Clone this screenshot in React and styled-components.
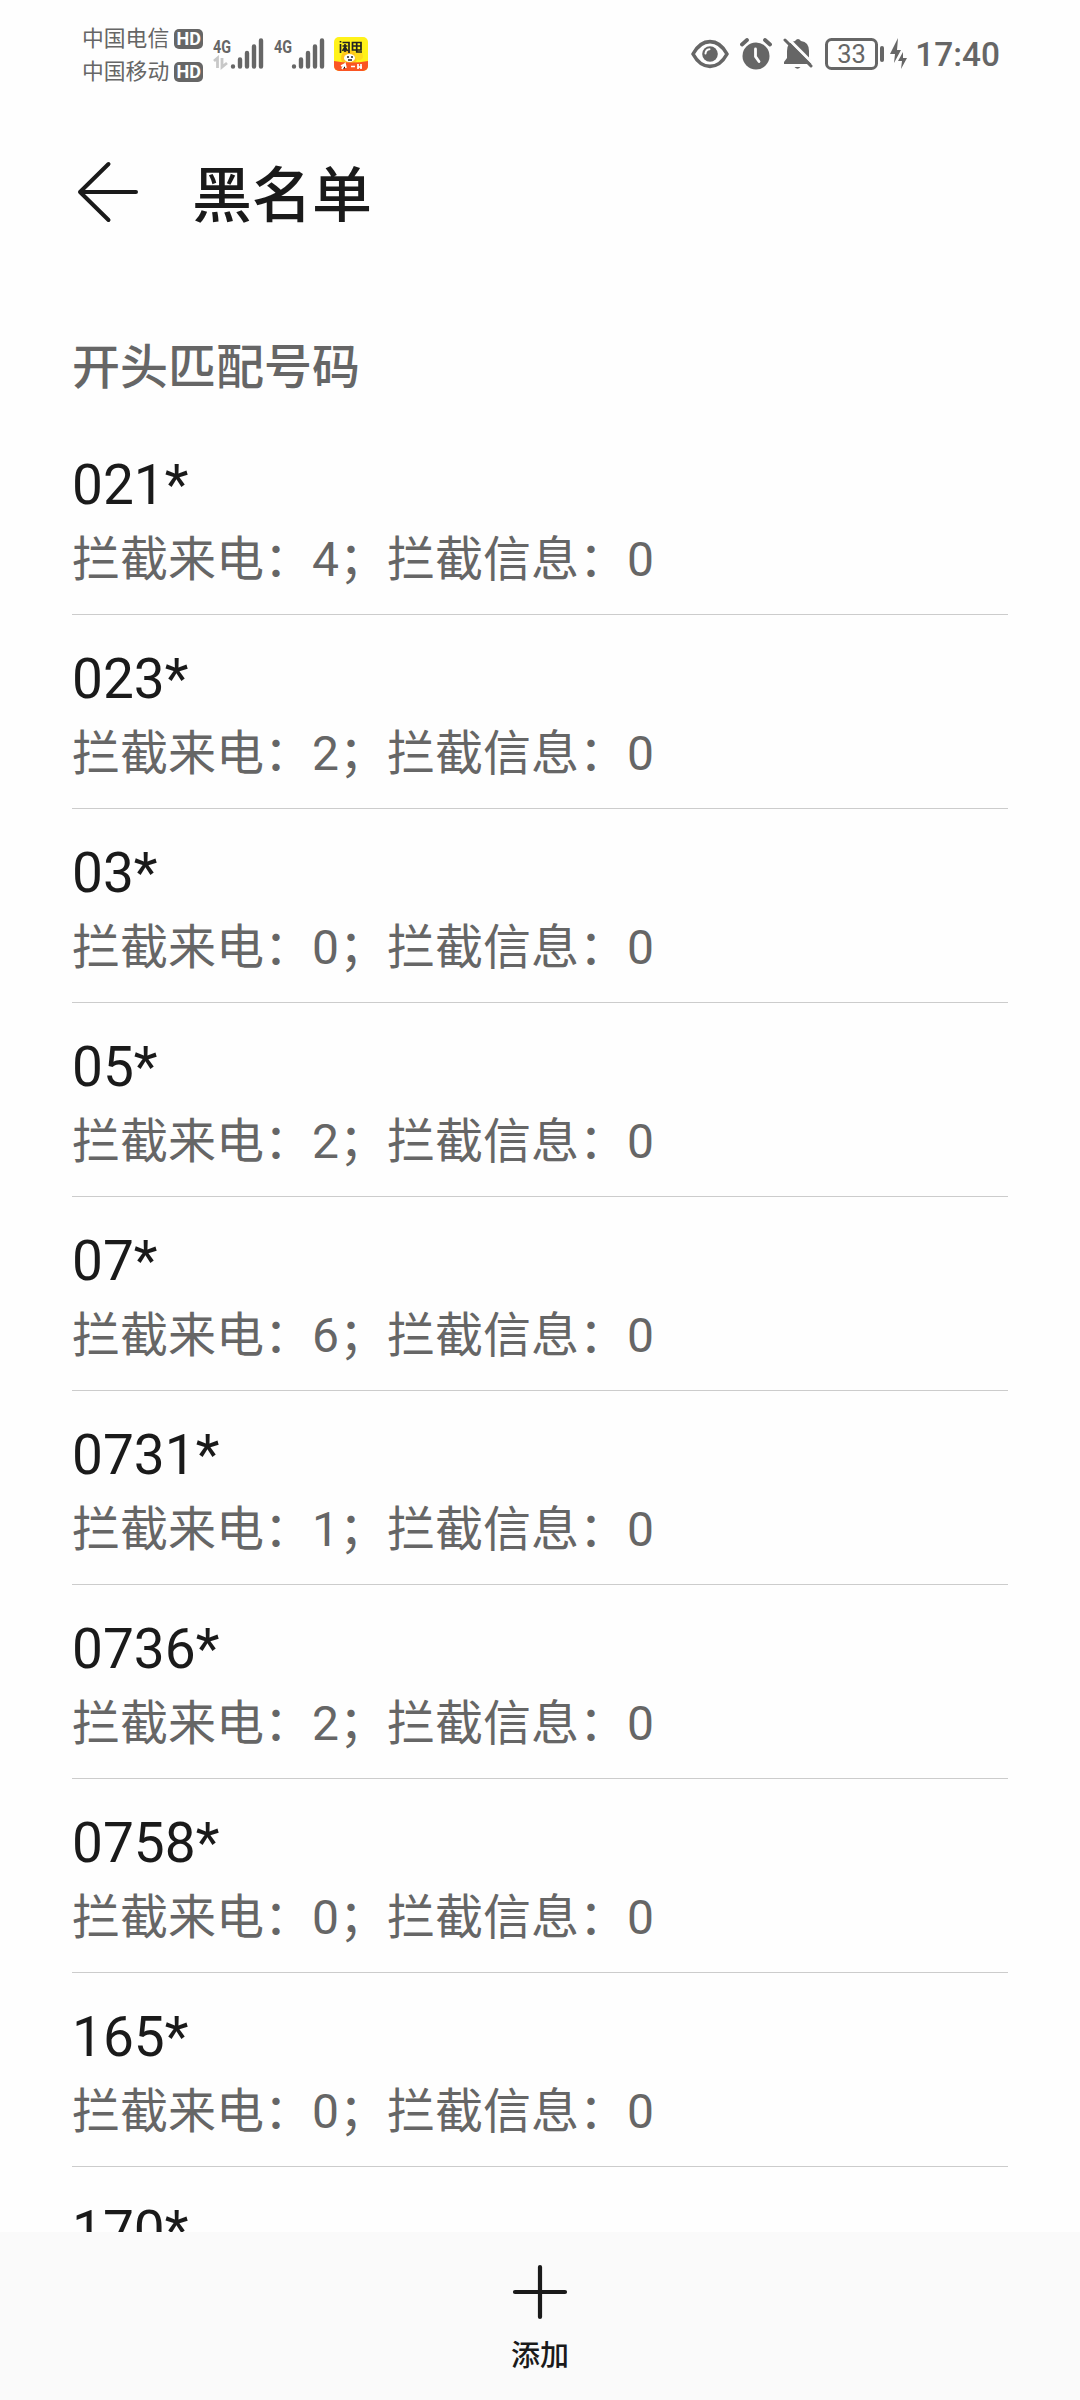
import React from "react";
import styled, { createGlobalStyle } from "styled-components";

const GlobalStyle = createGlobalStyle`
  * { box-sizing: border-box; }
  html, body { margin: 0; background: #fefefe; }
  body { font-family: Roboto, "Noto Sans CJK SC", sans-serif; color: #1a1a1a; }
`;

const Screen = styled.div`
  width: 1080px;
  height: 2400px;
  display: flex;
  flex-direction: column;
  overflow: hidden;
  background: #fefefe;
`;

const StatusBar = styled.div`
  flex: none;
  height: 108px;
  padding: 0 80px 0 82px;
  display: flex;
  align-items: center;
  justify-content: space-between;
  color: #666;
`;

const StatusGroup = styled.div`
  display: flex;
  align-items: center;
`;

const Carriers = styled.div`
  display: grid;
  padding-top: 2px;
`;

const Carrier = styled.div`
  display: flex;
  align-items: center;
  gap: 5px;
  height: 33px;
  font-size: 21.8px;
  line-height: 33px;
`;

const HdBadge = styled.span`
  width: 29px;
  height: 20px;
  border-radius: 5px;
  background: #666;
  color: #fefefe;
  font-size: 18px;
  font-weight: 700;
  line-height: 20px;
  text-align: center;
`;

const Signals = styled.svg`
  margin-left: 10px;
  display: block;
`;

const AppIcon = styled.svg`
  margin-left: 8px;
  display: block;
`;

const StatusIcon = styled.svg`
  display: block;
  margin-right: ${(p) => p.$gap || 0}px;
`;

const Clock = styled.span`
  padding-top: 2px;
  font-size: 33.4px;
  font-weight: 500;
  line-height: 40px;
`;

const Header = styled.header`
  flex: none;
  height: 168px;
  padding: 0 72px;
  display: flex;
  align-items: center;
  gap: 48px;
`;

const Title = styled.h1`
  margin: 0;
  padding-top: 9px;
  font-size: 60px;
  font-weight: 500;
  line-height: 80px;
`;

const List = styled.main`
  flex: 1;
  min-height: 0;
  overflow: hidden;
  padding: 58px 72px 0;
`;

const SectionTitle = styled.h2`
  margin: 0;
  height: 87px;
  font-size: 48px;
  font-weight: 500;
  line-height: 68px;
  color: #666;
`;

const Row = styled.div`
  height: 194px;
  padding-top: 29px;
  border-bottom: 1px solid #ccc;
`;

const Prefix = styled.div`
  font-size: 55px;
  line-height: 70px;
`;

const Counts = styled.div`
  margin-top: 5px;
  font-size: 48px;
  line-height: 70px;
  color: #666;
  white-space: nowrap;
`;

const BottomBar = styled.footer`
  flex: none;
  height: 168px;
  background: #fafafa;
  display: flex;
  flex-direction: column;
  align-items: center;
  padding-top: 32px;
`;

const AddLabel = styled.span`
  margin-top: 15px;
  font-size: 29px;
  font-weight: 500;
  line-height: 42px;
`;

const entries = [
  ["021*", 4], ["023*", 2], ["03*", 0], ["05*", 2], ["07*", 6],
  ["0731*", 1], ["0736*", 2], ["0758*", 0], ["165*", 0], ["170*", null],
];

const SignalBars = ({ x }) => (
  <path
    d={`M${x} 33.500v0.100M${x + 7} 33.500v-7M${x + 14} 33.500v-13.500M${x + 21} 33.500v-20M${x + 28} 33.500v-26`}
    stroke="#666"
    strokeWidth="4.4"
    strokeLinecap="round"
  />
);

function SignalIcons() {
  return (
    <Signals width="113" height="42" viewBox="0 0 113 42">
      <g fill="#666" fontFamily="Roboto" fontWeight="700" fontSize="18.5">
        <text x="0" y="19.500" textLength="18" lengthAdjust="spacingAndGlyphs">4G</text>
        <text x="61" y="19.500" textLength="18" lengthAdjust="spacingAndGlyphs">4G</text>
      </g>
      <path d="M1 28l3.500-3v10M9 25v9l5-4" fill="none" stroke="#c8c8c8" strokeWidth="2.8" />
      <SignalBars x={20} />
      <SignalBars x={81} />
    </Signals>
  );
}

export default function App() {
  return (
    <>
      <GlobalStyle />
      <Screen>
        <StatusBar>
          <StatusGroup>
            <Carriers>
              {["中国电信", "中国移动"].map((name) => (
                <Carrier key={name}>{name}<HdBadge>HD</HdBadge></Carrier>
              ))}
            </Carriers>
            <SignalIcons />
            <AppIcon width="34" height="34" viewBox="0 0 34 34">
              <defs><clipPath id="tile"><rect width="34" height="34" rx="5" /></clipPath></defs>
              <g clipPath="url(#tile)">
                <rect width="34" height="34" fill="#fff21a" />
                <circle cx="15" cy="21" r="8" fill="#ffc81e" />
                <circle cx="25" cy="19" r="4" fill="#ffdc1e" />
                <path d="M0 24q17 3 34 0v10H0z" fill="#fa5523" />
                <ellipse cx="15.500" cy="21" rx="5.500" ry="4" fill="#fff" />
                <path d="M14 19v2M18 19v2M14 23h4" stroke="#222" strokeWidth="1.5" />
                <path d="M6.500 7v9M8.500 5.500H15V16M6.500 4v1.500M8.500 9h5M11 7v8M8.500 14l2.500-4 2.500 4M18.500 5.500h8.500v7.500h-8.500zM18.500 9h8.500M22.700 5.500v9.500H28" fill="none" stroke="#222" strokeWidth="1.700" />
                <path d="M7 29l4-2M8 32l3-5 1 4M17 29.500h4M24 27v5M27 27v5M24 30h4" stroke="#fff" strokeWidth="1.700" />
              </g>
            </AppIcon>
          </StatusGroup>
          <StatusGroup>
            <StatusIcon $gap={11} width="38" height="32" viewBox="0 0 38 32">
              <path d="M2 16C11-0.500 27-0.500 36 16C27 32.500 11 32.500 2 16z" fill="none" stroke="#666" strokeWidth="3.600" strokeLinejoin="round" />
              <circle cx="19" cy="16" r="7.8" fill="#666" />
              <path d="M14.500 15.500q0.300-3.800 4-4.300" fill="none" stroke="#fefefe" strokeWidth="2" strokeLinecap="round" />
            </StatusIcon>
            <StatusIcon $gap={11} width="32" height="32" viewBox="0 0 32 32">
              <circle cx="16" cy="18" r="13.5" fill="#666" />
              <path d="M2 6.500l5-4.500M30 6.500l-5-4.500" stroke="#666" strokeWidth="3.8" strokeLinecap="round" />
              <path d="M15.500 11v7.500l3.500 5" fill="none" stroke="#fefefe" strokeWidth="2.8" strokeLinecap="round" />
            </StatusIcon>
            <StatusIcon $gap={12} width="30" height="32" viewBox="0 0 30 32">
              <path d="M1 26v-2l3-4V13Q4 4 12 3q3-4 6 0 8 1 8 10v7l3 4v2z" fill="#666" />
              <path d="M11.500 29h6q-3 3.500-6 0" fill="#666" />
              <path d="M4.500 0l26 26" stroke="#fefefe" strokeWidth="3" />
              <path d="M2 2l26 26" stroke="#666" strokeWidth="3" strokeLinecap="round" />
            </StatusIcon>
            <StatusIcon $gap={5} width="60" height="32" viewBox="0 0 60 32">
              <rect x="1.500" y="1.500" width="50" height="29" rx="5" fill="none" stroke="#666" strokeWidth="3" />
              <path d="M57 10v12" stroke="#666" strokeWidth="4" strokeLinecap="round" />
              <text x="26.500" y="25" textAnchor="middle" fill="#666" fontFamily="Roboto" fontSize="25.500">33</text>
            </StatusIcon>
            <StatusIcon $gap={8} width="17" height="32" viewBox="0 0 17 32">
              <path d="M8 0L0 16h5l-1 9 7-13H7zM13 14l-5 9h4l-1 8 6-11h-4z" fill="#666" />
            </StatusIcon>
            <Clock>17:40</Clock>
          </StatusGroup>
        </StatusBar>
        <Header>
          <svg width="72" height="72" viewBox="0 0 72 72">
            <path d="M36.500 8L8 36l28.500 28M8 36h56" fill="none" stroke="#1a1a1a" strokeWidth="4" strokeLinecap="round" strokeLinejoin="round" />
          </svg>
          <Title>黑名单</Title>
        </Header>
        <List>
          <SectionTitle>开头匹配号码</SectionTitle>
          {entries.map(([prefix, calls]) => (
            <Row key={prefix}>
              <Prefix>{prefix}</Prefix>
              {calls !== null && <Counts>拦截来电：{calls}；拦截信息：0</Counts>}
            </Row>
          ))}
        </List>
        <BottomBar>
          <svg width="56" height="56" viewBox="0 0 56 56">
            <path d="M28 3v50M3 28h50" stroke="#1a1a1a" strokeWidth="4.200" strokeLinecap="round" />
          </svg>
          <AddLabel>添加</AddLabel>
        </BottomBar>
      </Screen>
    </>
  );
}
